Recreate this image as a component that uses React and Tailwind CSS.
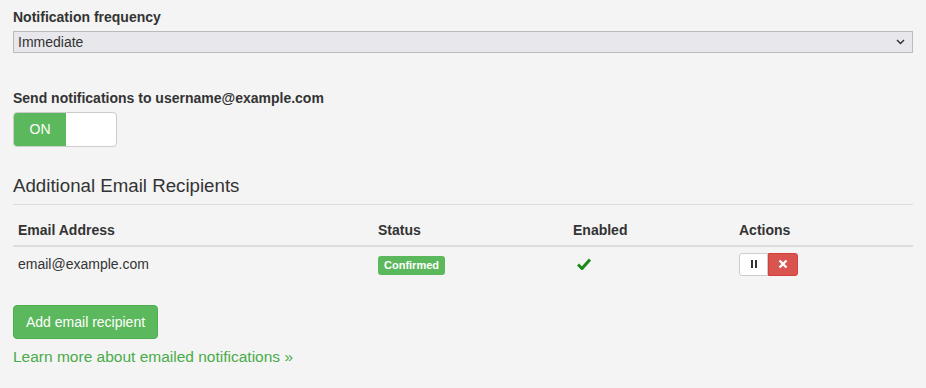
import React from 'react';

const Check = () => (
    <svg width="14" height="12" viewBox="0 0 14 12" className="block">
        <path d="M1 6.5 L5 10.5 L13 1.5" fill="none" stroke="#1a8a1a" strokeWidth="3" />
    </svg>
);

const App = () => {
    return (
        <div className="min-h-[388px] w-full bg-[#f4f4f4] px-[13px] pt-[7px] text-[14px] text-[#333] font-['Liberation_Sans',Arial,sans-serif]">
            {/* Frequency */}
            <label className="block font-bold leading-[20px]">Notification frequency</label>
            <div className="mt-[4px] flex h-[22px] w-[900px] items-center justify-between border border-[#bbb] bg-[#e8e8ec] pl-[4px] pr-[7px]">
                <span className="leading-[20px]">Immediate</span>
                <svg width="9" height="6" viewBox="0 0 9 6">
                    <path d="M1 1 L4.5 4.5 L8 1" fill="none" stroke="#333" strokeWidth="1.5" />
                </svg>
            </div>

            {/* Send to */}
            <label className="mt-[35px] block font-bold leading-[20px]">Send notifications to username@example.com</label>
            <div className="mt-[4px] flex h-[35px] w-[104px] overflow-hidden rounded-[4px] border border-[#ccc] bg-white">
                <div className="flex w-[52px] items-center justify-center bg-[#5cb85c] text-white">ON</div>
                <div className="flex-1" />
            </div>

            {/* Additional recipients */}
            <h3 className="mt-[27px] text-[18.7px] leading-[24px] text-[#333]">Additional Email Recipients</h3>
            <div className="mt-[6px] w-[900px] border-t border-[#ddd]" />

            <div className="mt-[10px] w-[900px]">
                <div className="grid grid-cols-[360px_195px_166px_179px] border-b-2 border-[#ddd] font-bold">
                    <div className="px-[5px] py-[5px] leading-[20px]">Email Address</div>
                    <div className="px-[5px] py-[5px] leading-[20px]">Status</div>
                    <div className="px-[5px] py-[5px] leading-[20px]">Enabled</div>
                    <div className="px-[5px] py-[5px] leading-[20px]">Actions</div>
                </div>
                <div className="grid grid-cols-[360px_195px_166px_179px] items-center">
                    <div className="px-[5px] py-[7px] leading-[20px]">email@example.com</div>
                    <div className="px-[5px]">
                        <span className="inline-block rounded-[3px] bg-[#5cb85c] px-[6px] py-[2px] text-[11px] font-bold leading-[15px] text-white">Confirmed</span>
                    </div>
                    <div className="px-[9px]">
                        <Check />
                    </div>
                    <div className="px-[5px]">
                        <div className="flex h-[23px] w-[59px]">
                            <button className="flex w-[29px] items-center justify-center gap-[2px] rounded-l-[3px] border border-[#ccc] bg-white">
                                <span className="h-[8px] w-[2px] bg-[#333]" />
                                <span className="h-[8px] w-[2px] bg-[#333]" />
                            </button>
                            <button className="flex w-[30px] items-center justify-center rounded-r-[3px] border border-[#d43f3a] bg-[#d9534f]">
                                <svg width="10" height="10" viewBox="0 0 10 10">
                                    <path d="M1.5 1.5 L8.5 8.5 M8.5 1.5 L1.5 8.5" stroke="#fff" strokeWidth="2.4" />
                                </svg>
                            </button>
                        </div>
                    </div>
                </div>
            </div>

            <button className="mt-[24px] h-[34px] rounded-[4px] border border-[#4cae4c] bg-[#5cb85c] px-[12px] text-white leading-[20px]">
                Add email recipient
            </button>
            <div className="mt-[8px] leading-[20px]">
                <a href="#" className="text-[15.5px] text-[#4aab4a]">Learn more about emailed notifications »</a>
            </div>
        </div>
    );
};

export default App;
